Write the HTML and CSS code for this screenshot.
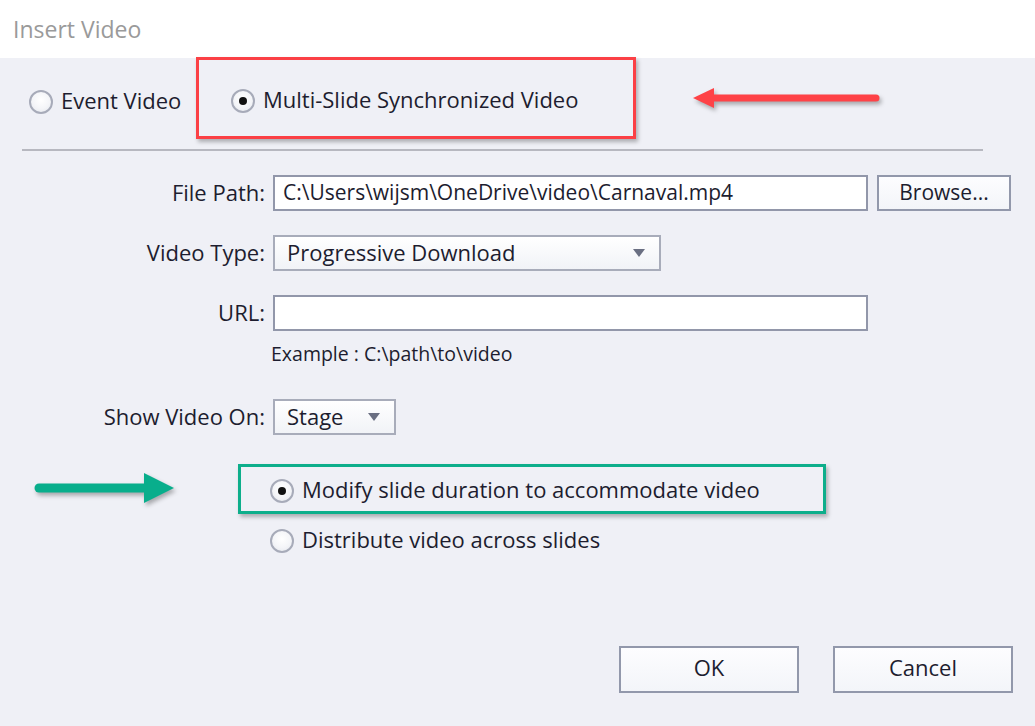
FILE: index.html
```html
<!DOCTYPE html>
<html>
<head>
<meta charset="utf-8">
<link rel="stylesheet" href="styles.css">
</head>
<body>
<div class="dialog">
  <header class="titlebar">Insert Video</header>
  <main class="content">
    <div class="mode-row">
      <label class="radio mode-event"><span class="dot"></span><span class="txt">Event Video</span></label>
      <div class="annot annot-red">
        <label class="radio"><span class="dot checked"></span><span class="txt">Multi-Slide Synchronized Video</span></label>
      </div>
      <svg class="arrow arrow-red" width="190" height="30" viewBox="0 0 190 30">
        <line x1="18" y1="14" x2="183" y2="14" stroke="#fe4247" stroke-width="7" stroke-linecap="round"/>
        <polygon points="0,14 21,4 21,24" fill="#fe4247"/>
      </svg>
    </div>
    <div class="sep"></div>
    <div class="form">
      <div class="row">
        <span class="lbl">File Path:</span>
        <div class="field input path-text w-path">C:\Users\wijsm\OneDrive\video\Carnaval.mp4</div>
        <button class="btn browse">Browse...</button>
      </div>
      <div class="row">
        <span class="lbl">Video Type:</span>
        <div class="field select w-type"><span>Progressive Download</span><span class="caret"></span></div>
      </div>
      <div class="group">
        <div class="row">
          <span class="lbl">URL:</span>
          <div class="field input w-path"></div>
        </div>
        <div class="example">Example : C:\path\to\video</div>
      </div>
      <div class="row show-row">
        <span class="lbl">Show Video On:</span>
        <div class="field select w-stage"><span>Stage</span><span class="caret"></span></div>
      </div>
    </div>
    <div class="sync-row">
      <svg class="arrow arrow-green" width="144" height="34" viewBox="0 0 144 34">
        <line x1="5" y1="16" x2="115" y2="16" stroke="#08ae8c" stroke-width="9" stroke-linecap="round"/>
        <polygon points="110,1 140,16 110,31" fill="#08ae8c"/>
      </svg>
      <div class="annot annot-green">
        <label class="radio"><span class="dot checked"></span><span class="txt">Modify slide duration to accommodate video</span></label>
      </div>
    </div>
    <label class="radio distribute"><span class="dot"></span><span class="txt">Distribute video across slides</span></label>
    <footer class="footer">
      <button class="btn action">OK</button>
      <button class="btn action">Cancel</button>
    </footer>
  </main>
</div>
</body>
</html>
```

FILE: styles.css
```css
* { box-sizing: border-box; }
html, body { margin: 0; padding: 0; }
body {
  width: 1035px;
  height: 726px;
  overflow: hidden;
  background: #eff0f6;
  font-family: "Open Sans", "Noto Sans", "DejaVu Sans", sans-serif;
  font-size: 22px;
  color: #1d1d2f;
}
.dialog { display: flex; flex-direction: column; height: 726px; }
.titlebar {
  height: 58px;
  background: #ffffff;
  padding-left: 13px;
  display: flex;
  align-items: center;
  font-size: 23px;
  color: #9a9a9a;
}
.content { flex: 1; display: flex; flex-direction: column; }

.radio {
  display: flex;
  align-items: center;
  gap: 8px;
  white-space: nowrap;
  line-height: 28px;
}
.txt { padding-bottom: 4px; }
.dot {
  width: 24px;
  height: 24px;
  border-radius: 50%;
  border: 2px solid #a7abb9;
  background: radial-gradient(circle at 50% 40%, #ffffff 0%, #f4f5f8 55%, #e3e5ec 100%);
  display: flex;
  align-items: center;
  justify-content: center;
  flex: none;
}
.dot.checked::after {
  content: "";
  width: 8px;
  height: 8px;
  border-radius: 50%;
  background: #111;
}

.mode-row {
  display: flex;
  align-items: center;
  height: 82px;
  margin-top: -1px;
  padding-left: 29px;
}
.mode-event { width: 167px; padding-top: 8px; }
.annot {
  display: flex;
  align-items: center;
  position: relative;
  box-shadow: 2px 3px 4px rgba(0, 0, 0, 0.28);
}
.annot-red {
  width: 440px;
  height: 82px;
  border: 3px solid #fb4045;
  padding-left: 32px;
  padding-top: 5px;
}
.arrow { flex: none; filter: drop-shadow(2px 3px 2px rgba(0, 0, 0, 0.3)); }
.arrow-red { margin-left: 57px; margin-top: 2px; }

.sep {
  margin: 10px 0 0 22px;
  width: 961px;
  height: 2px;
  background: #b7b8c0;
}

.form {
  display: flex;
  flex-direction: column;
  gap: 24px;
  margin-top: 24px;
}
.row { display: flex; align-items: center; }
.lbl {
  width: 273px;
  padding-right: 8px;
  padding-bottom: 3px;
  text-align: right;
  white-space: nowrap;
}
.field {
  height: 36px;
  border: 2px solid #9297aa;
  display: flex;
  align-items: center;
  white-space: nowrap;
  overflow: hidden;
  padding-bottom: 2px;
}
.input { background: #ffffff; padding-left: 8px; }
.path-text { font-size: 21px; }
.w-path { width: 595px; }
.select {
  background: linear-gradient(#ffffff, #f1f3f7);
  border-color: #a8acba;
  padding-left: 12px;
  justify-content: space-between;
  padding-right: 14px;
}
.w-type { width: 388px; }
.w-stage { width: 123px; }
.caret {
  width: 0;
  height: 0;
  border-left: 6px solid transparent;
  border-right: 6px solid transparent;
  border-top: 8px solid #6a6f82;
  margin-top: 2px;
}
.btn {
  font-family: inherit;
  font-size: 22px;
  color: #1d1d2f;
  border: 2px solid #9298ab;
  background: linear-gradient(#fdfdff, #f3f5f9);
  padding: 0 0 3px 0;
}
.browse { width: 134px; height: 36px; margin-left: 9px; font-size: 21px; }
.group { display: flex; flex-direction: column; }
.example {
  margin-left: 271px;
  margin-top: 12px;
  font-size: 19.5px;
  line-height: 22px;
}
.show-row { margin-top: 10px; }

.sync-row {
  display: flex;
  align-items: center;
  margin-top: 29px;
  padding-left: 34px;
}
.arrow-green { margin-right: 60px; }
.annot-green {
  width: 588px;
  height: 50px;
  border: 3px solid #0dae8b;
  padding-left: 29px;
  padding-top: 4px;
}
.distribute { margin: 11px 0 0 270px; }

.footer {
  display: flex;
  justify-content: flex-end;
  gap: 34px;
  padding-right: 22px;
  margin-top: 89px;
}
.action { width: 180px; height: 47px; padding-bottom: 5px; }
```
